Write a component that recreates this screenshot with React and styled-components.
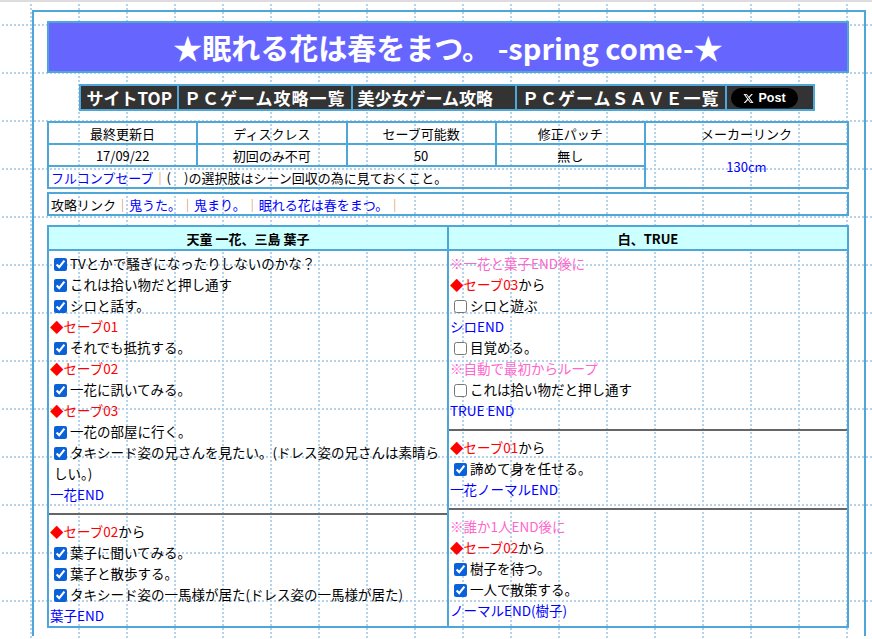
import React from "react";
import styled, { createGlobalStyle } from "styled-components";

const grid = encodeURIComponent(
  `<svg xmlns="http://www.w3.org/2000/svg" width="48" height="48"><g fill="#b4d2ea"><path d="M0 0h2v2H0zM4 0h2v2H4zM8 0h2v2H8zM12 0h2v2h-2zM16 0h2v2h-2zM20 0h2v2h-2zM24 0h2v2h-2zM28 0h2v2h-2zM32 0h2v2h-2zM36 0h2v2h-2zM40 0h2v2h-2zM44 0h2v2h-2zM0 4h2v2H0zM0 8h2v2H0zM0 12h2v2H0zM0 16h2v2H0zM0 20h2v2H0zM0 24h2v2H0zM0 28h2v2H0zM0 32h2v2H0zM0 36h2v2H0zM0 40h2v2H0zM0 44h2v2H0z"/></g></svg>`
);

const Global = createGlobalStyle`
  html, body { margin: 0; padding: 0; }
  body {
    background: #fff url("data:image/svg+xml,${grid}") 30px 24px repeat;
    font-family: "Noto Sans CJK JP", "Noto Sans", sans-serif;
    color: #000;
    border-top: 2px solid #ddd;
  }
`;

const Container = styled.div`
  margin: 8px 0 0 32px;
  width: 802px;
  border: 2px solid #4fa6d8;
  border-bottom: none;
  padding: 9px 15px 8px 13px;
`;

const Title = styled.h1`
  margin: 0;
  height: 48px;
  background: #6666ff;
  border: 2px solid #4fa6d8;
  color: #fff;
  font-size: 29px;
  font-weight: bold;
  text-align: center;
  line-height: 48px;
`;

const Nav = styled.div`
  display: flex;
  justify-content: center;
  margin: 11px 0 10px;
`;

const NavItem = styled.span`
  background: #333;
  color: #fff;
  font-weight: bold;
  font-size: 17px;
  line-height: 21px;
  padding: 1px 5px;
  border: 2px solid #4fa6d8;
  margin-left: -2px;
  letter-spacing: ${(p) => (p.$wide ? "1px" : "0")};
`;

const XButton = styled.span`
  display: inline-flex;
  align-items: center;
  gap: 5px;
  background: #000;
  color: #fff;
  border-radius: 10px;
  font-family: "Liberation Sans", sans-serif;
  font-size: 12.5px;
  font-weight: bold;
  padding: 0 12px;
  height: 20px;
  margin-top: 1px;
`;

const NavX = styled(NavItem)`
  padding: 1px 4px;
  display: flex;
  align-items: center;
  width: 78px;
`;

const Table = styled.table`
  width: 100%;
  border-collapse: collapse;
  border: 2px solid #4fa6d8;
  margin-bottom: ${(p) => p.$mb || 0}px;
  table-layout: fixed;
`;

const Td = styled.td`
  border: 2px solid #4fa6d8;
  font-size: 13px;
  height: 20px;
  padding: 0 2px;
  text-align: ${(p) => (p.$left ? "left" : "center")};
`;

const Blue = styled.span`
  color: #0000ff;
`;
const Sep = styled.span`
  color: #e07b39;
`;

const Main = styled.table`
  width: 100%;
  border-collapse: collapse;
  border: 2px solid #4fa6d8;
  table-layout: fixed;
`;

const Th = styled.th`
  background: #ccffff;
  border: 2px solid #4fa6d8;
  font-size: 13px;
  height: 20px;
`;

const Col = styled.td`
  border: 2px solid #4fa6d8;
  vertical-align: top;
  padding: 0;
  font-size: 13.5px;
  line-height: 21px;
`;

const Block = styled.div`
  padding: 2px 1px 0;
  & + & {
    border-top: 2px solid #666;
    margin-top: 8px;
    padding-top: 6px;
  }
`;

const Line = styled.div`
  color: ${(p) => p.$c || "#000"};
`;

const Check = styled.label`
  display: block;
  padding-left: 4px;
  input {
    margin: 0 3px 0 0;
    width: 13px;
    height: 13px;
    vertical-align: -2px;
    accent-color: #0b61d8;
  }
`;

const Red = styled.span`
  color: #ff0000;
`;

const Save = ({ n, from }) => (
  <Line>
    <Red>◆セーブ{n}</Red>
    {from && "から"}
  </Line>
);

const C = ({ on = true, children }) => (
  <Check>
    <input type="checkbox" defaultChecked={on} readOnly />
    {children}
  </Check>
);

export default function App() {
  return (
    <>
      <Global />
      <Container>
        <Title>★眠れる花は春をまつ。 -spring come-★</Title>
        <Nav>
          <NavItem>サイトTOP</NavItem>
          <NavItem $wide>ＰＣゲーム攻略一覧</NavItem>
          <NavItem>美少女ゲーム攻略　</NavItem>
          <NavItem $wide>ＰＣゲームＳＡＶＥ一覧</NavItem>
          <NavX>
            <XButton>
              <svg width="11" height="11" viewBox="0 0 24 24">
                <path fill="#fff" d="M18.2 2h3.4l-7.4 8.5L23 22h-6.8l-5.3-7-6.1 7H1.4l7.9-9L1 2h7l4.8 6.4zm-1.2 18h1.9L7.1 4H5.1z" />
              </svg>
              Post
            </XButton>
          </NavX>
        </Nav>
        <Table $mb={3}>
          <tbody>
            <tr>
              <Td>最終更新日</Td>
              <Td>ディスクレス</Td>
              <Td>セーブ可能数</Td>
              <Td>修正パッチ</Td>
              <Td style={{ width: 197 }}>メーカーリンク</Td>
            </tr>
            <tr>
              <Td>17/09/22</Td>
              <Td>初回のみ不可</Td>
              <Td>50</Td>
              <Td>無し</Td>
              <Td rowSpan={2}>
                <Blue>130cm</Blue>
              </Td>
            </tr>
            <tr>
              <Td $left colSpan={4}>
                <Blue>フルコンプセーブ</Blue>
                <Sep>｜</Sep>(　)の選択肢はシーン回収の為に見ておくこと。
              </Td>
            </tr>
          </tbody>
        </Table>
        <Table $mb={9}>
          <tbody>
            <tr>
              <Td $left>
                攻略リンク<Sep>｜</Sep>
                <Blue>鬼うた。</Blue>
                <Sep>｜</Sep>
                <Blue>鬼まり。</Blue>
                <Sep>｜</Sep>
                <Blue>眠れる花は春をまつ。</Blue>
                <Sep>｜</Sep>
              </Td>
            </tr>
          </tbody>
        </Table>
        <Main>
          <thead>
            <tr>
              <Th>天童 一花、三島 葉子</Th>
              <Th>白、TRUE</Th>
            </tr>
          </thead>
          <tbody>
            <tr>
              <Col>
                <Block>
                  <C>TVとかで騒ぎになったりしないのかな？</C>
                  <C>これは拾い物だと押し通す</C>
                  <C>シロと話す。</C>
                  <Save n="01" />
                  <C>それでも抵抗する。</C>
                  <Save n="02" />
                  <C>一花に訊いてみる。</C>
                  <Save n="03" />
                  <C>一花の部屋に行く。</C>
                  <C>タキシード姿の兄さんを見たい。(ドレス姿の兄さんは素晴らしい。)</C>
                  <Line $c="#0000ff">一花END</Line>
                </Block>
                <Block>
                  <Save n="02" from />
                  <C>葉子に聞いてみる。</C>
                  <C>葉子と散歩する。</C>
                  <C>タキシード姿の一馬様が居た(ドレス姿の一馬様が居た)</C>
                  <Line $c="#0000ff">葉子END</Line>
                </Block>
              </Col>
              <Col>
                <Block>
                  <Line $c="#ff66cc">※一花と葉子END後に</Line>
                  <Save n="03" from />
                  <C on={false}>シロと遊ぶ</C>
                  <Line $c="#0000ff">シロEND</Line>
                  <C on={false}>目覚める。</C>
                  <Line $c="#ff66cc">※自動で最初からループ</Line>
                  <C on={false}>これは拾い物だと押し通す</C>
                  <Line $c="#0000ff">TRUE END</Line>
                </Block>
                <Block>
                  <Save n="01" from />
                  <C>諦めて身を任せる。</C>
                  <Line $c="#0000ff">一花ノーマルEND</Line>
                </Block>
                <Block>
                  <Line $c="#ff66cc">※誰か1人END後に</Line>
                  <Save n="02" from />
                  <C>樹子を待つ。</C>
                  <C>一人で散策する。</C>
                  <Line $c="#0000ff">ノーマルEND(樹子)</Line>
                </Block>
              </Col>
            </tr>
          </tbody>
        </Main>
      </Container>
    </>
  );
}
